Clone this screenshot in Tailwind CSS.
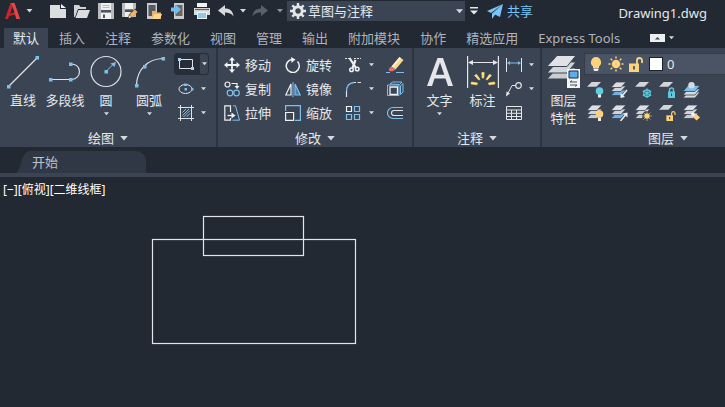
<!DOCTYPE html>
<html lang="zh-CN">
<head>
    <meta charset="UTF-8">
    <meta name="viewport" content="width=device-width, initial-scale=1.0">
    <title>Drawing1.dwg</title>
    <script src="https://cdn.jsdelivr.net/npm/@tailwindcss/browser@4"></script>
</head>
<body class="min-h-screen flex flex-col bg-[#222933] text-[13px] leading-4 text-[#e4e8ed] font-['Noto_Sans','Noto_Sans_CJK_SC',sans-serif]">

    <!-- Shared shapes -->
    <svg class="hidden">
        <symbol id="caret" viewBox="0 0 6 4"><path d="M0 0h6L3 3.6z" fill="#d5d9df"/></symbol>
        <symbol id="sheet" viewBox="0 0 16 16"><path d="M5 0h10l-5 5H0z" fill="#d3d5d8"/></symbol>
        <symbol id="stack" viewBox="0 0 16 16">
            <g stroke="#3b4453" stroke-width=".8">
                <path d="M5 8h10l-5 5.500H0z" fill="#c9ccd1"/>
                <path d="M5 4h10l-5 5.500H0z" fill="#d0d3d7"/>
                <path d="M5 0h10l-5 5.500H0z" fill="#dcdee1"/>
            </g>
        </symbol>
        <symbol id="stack-blue" viewBox="0 0 16 16">
            <g stroke="#3b4453" stroke-width=".8">
                <path d="M5 8h10l-5 5.500H0z" fill="#6fb0e6"/>
                <path d="M5 4h10l-5 5.500H0z" fill="#d0d3d7"/>
                <path d="M5 0h10l-5 5.500H0z" fill="#dcdee1"/>
            </g>
        </symbol>
        <symbol id="bulb" viewBox="0 0 12 14">
            <path d="M6 0a5.300 5.300 0 0 1 3 9.500V11H3V9.500A5.300 5.300 0 0 1 6 0z" fill="#fdd27c"/>
            <path d="M3.500 11.500h5V13l-1 1h-3l-1-1z" fill="#f1f1f1"/>
        </symbol>
        <symbol id="sun" viewBox="0 0 16 16">
            <circle cx="8" cy="8" r="4.300" fill="#fdd27c"/>
            <path d="M8 .5v2M8 13.500v2M.5 8h2M13.500 8h2M2.700 2.700l1.500 1.500M11.800 11.800l1.500 1.500M13.300 2.700l-1.500 1.500M4.200 11.800l-1.500 1.500" stroke="#fdd27c" stroke-width="1.500"/>
        </symbol>
        <symbol id="unlock" viewBox="0 0 14 15">
            <path d="M8 7V3.500a2.500 2.500 0 0 1 5 0V6" fill="none" stroke="#fdd27c" stroke-width="1.800"/>
            <path d="M0 6.500h10V15H0z" fill="#fdd27c"/>
            <path d="M4.200 9h1.600v3.500H4.200z" fill="#3b4453"/>
        </symbol>
    </svg>

    <!-- Title bar -->
    <header class="flex h-7 items-center pb-1.5 shrink-0">
        <button type="button" aria-label="应用程序菜单" class="flex w-[46px] items-center gap-1.5 pl-[5px]">
            <svg class="w-[15px] h-4" viewBox="0 0 15 16">
                <path d="M0 16 5.500 0h4L15 16h-3.500L10 11.500 4 13l-1 3z" fill="#c8252c"/>
                <path d="M5.500 0h4L15 16h-3.500L7.500 3z" fill="#e2474c"/>
                <path d="m7.400 4 2 5.500-4.200 1.200z" fill="#222933"/>
            </svg>
            <svg class="w-[7px] h-1"><use href="#caret"/></svg>
        </button>
        <button type="button" aria-label="新建" class="w-6 flex justify-center">
            <svg class="w-4 h-4" viewBox="0 0 16 16"><path d="M0 2h10v4h6v9H0z" fill="#dcdddf"/><path d="m11 1 5 4h-5z" fill="#f4f4f4"/></svg>
        </button>
        <button type="button" aria-label="打开" class="w-6 flex justify-center">
            <svg class="w-4 h-4" viewBox="0 0 16 16"><path d="M0 2h5l1.500 2H12v2H4L1 14H0z" fill="#cfd1d4"/><path d="M4.500 7H16l-3 8H1.500z" fill="#dcdddf"/></svg>
        </button>
        <button type="button" aria-label="保存" class="w-6 flex justify-center">
            <svg class="w-4 h-4" viewBox="0 0 16 16"><path d="M0 0h16v16H0z" fill="#b9bbbe"/><path d="M3 0h10v7H3zM3 9.500h10V16H3z" fill="#f0f0f0"/><path d="M3 7h10v2.500H3zM5 11.500h2V15H5z" fill="#4c525c"/><path d="M4.500 2.500h7M4.500 4.500h7" stroke="#b9bbbe"/></svg>
        </button>
        <button type="button" aria-label="另存为" class="w-6 flex justify-center">
            <svg class="w-4 h-4" viewBox="0 0 16 16"><path d="M0 0h14v14H0z" fill="#b9bbbe"/><path d="M3 0h8v6H3zM3 9h5v5H3z" fill="#f0f0f0"/><path d="M3 6.500h8V9H3z" fill="#4c525c"/><path d="m6 15.500 1-4 6.500-6 2.500 3-6.500 6z" fill="#222933"/><path d="m7.500 11.500 5.500-5 2.500 2.500-5.500 5.500z" fill="#f2b66b"/><path d="m7.500 12 2 2-3 1.500z" fill="#f2e3cc"/></svg>
        </button>
        <button type="button" aria-label="从移动设备打开" class="w-6 flex justify-center">
            <svg class="w-4 h-4" viewBox="0 0 16 16"><path d="M1 0h10v16H1z" fill="#c9cbce"/><path d="M2.500 2h7v11h-7z" fill="#555b64"/><path d="M6 8h4l1 1.500h4V16H6z" fill="#e8b264"/><path d="M8 11h8l-2 5H6z" fill="#fdd58f"/></svg>
        </button>
        <button type="button" aria-label="保存到移动设备" class="w-6 flex justify-center">
            <svg class="w-4 h-4" viewBox="0 0 16 16"><path d="M4 0h10v16H4z" fill="#c9cbce"/><path d="M5.500 2h7v11h-7z" fill="#6c6560"/><path d="M1 4.500h5V2l5 4.500L6 11V8.500H1z" fill="#6cc0f5"/></svg>
        </button>
        <button type="button" aria-label="打印" class="w-6 flex justify-center">
            <svg class="w-4 h-4" viewBox="0 0 16 16"><path d="M3 0h10v4H3z" fill="#f2f2f2"/><path d="M0 5h16v7H0z" fill="#dcdddf"/><path d="M1 6.500h14" stroke="#59606b" stroke-width="1.200"/><path d="M3 9h10v7H3z" fill="#f2f2f2"/><path d="M4 10h8v5H4z" fill="#8cc9ee"/></svg>
        </button>
        <button type="button" aria-label="放弃" class="w-6 flex justify-center">
            <svg class="w-4 h-4" viewBox="0 0 16 16"><path d="M0 7.500 7 2v3.500c5 0 8 2.500 8.500 8C13.500 10.500 11 9.500 7 9.500V13z" fill="#d7d9dc"/></svg>
        </button>
        <button type="button" aria-label="放弃列表" class="w-2.5 flex justify-center"><svg class="w-1.5 h-1"><use href="#caret"/></svg></button>
        <button type="button" aria-label="重做" class="w-6 flex justify-center">
            <svg class="w-4 h-4" viewBox="0 0 16 16"><path d="M16 7.500 9 2v3.500c-5 0-8 2.500-8.500 8C2.500 10.500 5 9.500 9 9.500V13z" fill="#5a6069"/></svg>
        </button>
        <button type="button" aria-label="重做列表" class="w-[15px] flex justify-center opacity-60"><svg class="w-1.5 h-1"><use href="#caret"/></svg></button>
        <div class="relative flex h-5 w-[178px] items-center bg-[#3b4453] pl-[3px]">
            <svg class="w-4 h-4 shrink-0" viewBox="0 0 16 16">
                <circle cx="8" cy="8" r="4.200" fill="none" stroke="#e6e6e6" stroke-width="3"/>
                <path d="M8 0v3M8 13v3M0 8h3M13 8h3M2.300 2.300l2.200 2.200M11.500 11.500l2.200 2.200M13.700 2.300l-2.200 2.200M4.500 11.500l-2.200 2.200" stroke="#e6e6e6" stroke-width="2.400"/>
            </svg>
            <select aria-label="工作空间" class="h-5 w-full appearance-none bg-transparent pl-0.5 leading-5 outline-none">
                <option>草图与注释</option>
                <option>三维基础</option>
                <option>三维建模</option>
            </select>
            <svg class="pointer-events-none absolute right-0.5 top-2 w-[7px] h-[5px]"><use href="#caret"/></svg>
        </div>
        <button type="button" aria-label="自定义快速访问工具栏" class="w-[18px] flex justify-center">
            <svg class="w-2 h-2" viewBox="0 0 8 8"><path d="M0 0h8v1.500H0zM0 3.500h8L4 7.500z" fill="#e6e8eb"/></svg>
        </button>
        <a href="#" class="ml-1 flex items-center gap-1 text-[#7cc4f5]">
            <svg class="w-4 h-[15px]" viewBox="0 0 16 15"><path d="M16 0 0 7l4 2zM16 0 5 9.500V15l2.500-3.500zM16 0 8 10.500l5 2.500z" fill="#7cc4f5"/></svg>
            共享
        </a>
        <h1 class="ml-auto pr-[18px] pt-1 whitespace-nowrap">Drawing1.dwg</h1>
    </header>

    <!-- Ribbon tabs -->
    <nav class="flex h-5 shrink-0 items-stretch pl-[3px] leading-5 text-[#aeb4bd] whitespace-nowrap">
        <a href="#" class="mx-px px-[9px] bg-[#3b4453] text-[#e4e8ed]">默认</a>
        <a href="#" class="px-2.5">插入</a>
        <a href="#" class="px-2.5">注释</a>
        <a href="#" class="px-2.5">参数化</a>
        <a href="#" class="px-2.5">视图</a>
        <a href="#" class="px-2.5">管理</a>
        <a href="#" class="px-2.5">输出</a>
        <a href="#" class="px-2.5">附加模块</a>
        <a href="#" class="px-2.5">协作</a>
        <a href="#" class="px-2.5">精选应用</a>
        <a href="#" class="px-2.5">Express Tools</a>
        <button type="button" aria-label="最小化功能区" class="ml-5 flex items-center gap-1">
            <svg class="w-[15px] h-2" viewBox="0 0 15 8"><path d="M0 0h15v8H0z" fill="#eceef0"/><path d="M5 5.500h5L7.500 3z" fill="#3b4453"/></svg>
            <svg class="w-[5px] h-1"><use href="#caret"/></svg>
        </button>
    </nav>

    <!-- Ribbon -->
    <main class="flex grow flex-col">
        <div class="flex h-[99px] shrink-0 divide-x-2 divide-[#2c3440] bg-[#3b4453]">

            <!-- Draw -->
            <section class="flex w-[218px] shrink-0 flex-col pt-[5px]">
                <div class="flex h-[72px] pl-0.5">
                    <button type="button" class="flex w-[42px] flex-col items-center">
                        <svg class="w-8 h-[39px] shrink-0" viewBox="0 0 32 39"><path d="M2 33 30 5" stroke="#dfe2e6" stroke-width="1.200"/><path d="M0 32h3.500v3.500H0zM28.500 3H32v3.500h-3.500z" fill="#7cc0ee"/></svg>
                        直线
                    </button>
                    <button type="button" class="flex w-[42px] flex-col items-center">
                        <svg class="w-8 h-[39px] shrink-0" viewBox="0 0 32 39"><path d="M2 26.500h20c4.500 0 8.500-3 8.500-8s-4-7.500-8.500-7.500" fill="none" stroke="#dfe2e6" stroke-width="1.200"/><path d="M0 25h3.500v3.500H0zM20 25h3.500v3.500H20zM20 9.500h3.500V13H20z" fill="#7cc0ee"/></svg>
                        多段线
                    </button>
                    <button type="button" class="flex w-[40px] flex-col items-center">
                        <svg class="w-8 h-[39px] shrink-0" viewBox="0 0 32 39"><circle cx="16" cy="18.500" r="15" fill="none" stroke="#dfe2e6" stroke-width="1.200"/><path d="m16 18.500 7-7" stroke="#7cc0ee"/><path d="M14.500 17H18v3.500h-3.500zM26 9l-1.500 5-4-3.500z" fill="#7cc0ee"/></svg>
                        圆
                        <svg class="mt-1 w-[5px] h-1"><use href="#caret"/></svg>
                    </button>
                    <button type="button" class="flex w-[46px] flex-col items-center">
                        <svg class="w-8 h-[39px] shrink-0" viewBox="0 0 32 39"><path d="M3.500 32C4 17 14 6 30 5.500" fill="none" stroke="#dfe2e6" stroke-width="1.200"/><path d="M2 31h3.500v3.500H2zM10 12h3.500v3.500H10zM28.500 4H32v3.500h-3.500z" fill="#7cc0ee"/></svg>
                        圆弧
                        <svg class="mt-1 w-[5px] h-1"><use href="#caret"/></svg>
                    </button>
                    <div class="ml-0.5 grid w-[35px] grid-rows-3">
                        <button type="button" aria-label="矩形" class="flex h-[22px] items-center gap-[5px] rounded-sm bg-[#272e39] pl-1">
                            <svg class="w-4 h-4" viewBox="0 0 16 16"><path d="M1.500 3.500h13v9h-13z" fill="none" stroke="#dfe2e6"/><path d="M0 2h3v3H0zM13 11h3v3h-3z" fill="#a9d4f2"/></svg>
                            <span class="flex h-full flex-1 items-center justify-center rounded-r-sm bg-[#3b4453] border border-[#272e39]"><svg class="w-[5px] h-1"><use href="#caret"/></svg></span>
                        </button>
                        <button type="button" aria-label="椭圆" class="flex items-center gap-[7px] pl-1">
                            <svg class="w-4 h-4" viewBox="0 0 16 16"><ellipse cx="7.500" cy="8" rx="6.500" ry="4.500" fill="none" stroke="#dfe2e6"/><path d="M6 2.500h3v2.500H6zM6.500 7H9v2.500H6.500zM13 7h2.500v2.500H13z" fill="#7cc0ee"/></svg>
                            <svg class="w-[5px] h-1"><use href="#caret"/></svg>
                        </button>
                        <button type="button" aria-label="图案填充" class="flex items-center gap-[7px] pl-1">
                            <svg class="w-4 h-4" viewBox="0 0 16 16"><path d="m4.500 7.500 3.500-3.500M4.500 10.500 11 4M5.500 12 12 5.500M8.500 12 12 8.500" stroke="#7cc0ee"/><path d="M0 2.500h16M0 13.500h16M2.500 0v16M13.500 0v16" stroke="#dfe2e6"/></svg>
                            <svg class="w-[5px] h-1"><use href="#caret"/></svg>
                        </button>
                    </div>
                </div>
                <button type="button" class="flex h-[22px] items-center justify-center gap-1.5 pt-1">绘图 <svg class="w-2 h-[5px]"><use href="#caret"/></svg></button>
            </section>

            <!-- Modify -->
            <section class="flex w-[196px] shrink-0 flex-col pt-[5px]">
                <div class="grid h-[72px] grid-cols-[61px_60px_41px_20px] grid-rows-3 pl-1.5">
                    <button type="button" class="flex items-center gap-[5px]">
                        <svg class="w-4 h-4" viewBox="0 0 16 16"><path d="M8 2v12M2 8h12" stroke="#f0f1f3" stroke-width="1.800"/><path d="m8 0 3 3.500H5zM8 16l3-3.500H5zM0 8l3.500-3v6zM16 8l-3.500-3v6z" fill="#f0f1f3"/></svg>
                        移动
                    </button>
                    <button type="button" class="flex items-center gap-[5px]">
                        <svg class="w-4 h-4" viewBox="0 0 16 16"><path d="M12.500 4.500A6.500 6.500 0 1 1 7 2.500" fill="none" stroke="#f0f1f3" stroke-width="1.500"/><path d="m6 0 4.500 2.500L6.500 6z" fill="#f0f1f3"/></svg>
                        旋转
                    </button>
                    <button type="button" aria-label="修剪" class="flex items-center gap-2">
                        <svg class="w-4 h-4" viewBox="0 0 16 16"><path d="M0 1.500h4M9 1.500h7" stroke="#dfe2e6" stroke-dasharray="2 1"/><path d="m4.500 1 6.500 10M10.500 3 7.500 11" stroke="#f0f1f3" stroke-width="2.200"/><circle cx="6.500" cy="12.800" r="1.800" fill="none" stroke="#f0f1f3" stroke-width="1.500"/><circle cx="12.200" cy="12" r="1.800" fill="none" stroke="#f0f1f3" stroke-width="1.500"/></svg>
                        <svg class="w-[5px] h-1"><use href="#caret"/></svg>
                    </button>
                    <button type="button" aria-label="删除" class="flex items-center">
                        <svg class="w-[18px] h-4" viewBox="0 0 18 16"><path d="M0 15.500h4M10 15.500h8" stroke="#7cc0ee"/><path d="M13.500 0 17.500 3l-8 9.500-4-3z" fill="#fcd988"/><path d="m13.500 0 1.500 1.200-8 9.300-1.500-1z" fill="#f4efdf"/><path d="m5.500 9.500 4 3C7 15 3.500 14.500 3 13.500s0-2.500 2.500-4z" fill="#ee6b6b"/></svg>
                    </button>

                    <button type="button" class="flex items-center gap-[5px]">
                        <svg class="w-4 h-4" viewBox="0 0 16 16"><g fill="none"><circle cx="3.500" cy="3.500" r="2.500" stroke="#f0f1f3" stroke-width="1.200"/><path d="M7.500 2.500H13V6" stroke="#f0f1f3" stroke-width="1.200"/><g stroke="#7cc0ee" stroke-width="1.200"><circle cx="6" cy="12" r="2.800"/><circle cx="12.500" cy="12" r="2.800"/></g></g><path d="M10.500 5h5L13 8z" fill="#f0f1f3"/></svg>
                        复制
                    </button>
                    <button type="button" class="flex items-center gap-[5px]">
                        <svg class="w-4 h-4" viewBox="0 0 16 16"><path d="M6 3v11H.8z" fill="none" stroke="#f0f1f3" stroke-width="1.200"/><path d="M10 3v11h5.200z" fill="#4f7fa8" stroke="#7cc0ee" stroke-width="1.200"/><path d="M8 1v15" stroke="#7cc0ee"/></svg>
                        镜像
                    </button>
                    <button type="button" aria-label="圆角" class="flex items-center gap-2">
                        <svg class="w-4 h-4" viewBox="0 0 16 16"><path d="M1.500 10C1.500 5 4.500 2 9 1.500" fill="none" stroke="#7cc0ee" stroke-width="1.300"/><path d="M1.500 16v-6M9 1.500h2M12.500 1.500H16" stroke="#dfe2e6" stroke-width="1.200"/></svg>
                        <svg class="w-[5px] h-1"><use href="#caret"/></svg>
                    </button>
                    <button type="button" aria-label="分解" class="flex items-center">
                        <svg class="w-[18px] h-4" viewBox="0 0 18 16"><path d="M4 6h7.500v7.500H4z" fill="none" stroke="#f0f1f3" stroke-width="1.300"/><path d="M1.500 14.500V4H13v10.500zM4 3 6.500 1H16l-2.500 2.500zM14.500 5 17 2.500V11l-2.500 2.500z" fill="none" stroke="#7cc0ee"/></svg>
                    </button>

                    <button type="button" class="flex items-center gap-[5px]">
                        <svg class="w-4 h-4" viewBox="0 0 16 16"><path d="M6.500 7V.8H.8v14.400h5.700V13" fill="none" stroke="#f0f1f3" stroke-width="1.200"/><path d="M9 .8h2.500l4 14.400H8.500" fill="none" stroke="#7cc0ee"/><path d="M3.500 10.500H8" stroke="#f0f1f3" stroke-width="1.300"/><path d="m7.500 7.500 4 3-4 3z" fill="#f0f1f3"/></svg>
                        拉伸
                    </button>
                    <button type="button" class="flex items-center gap-[5px]">
                        <svg class="w-4 h-4" viewBox="0 0 16 16"><path d="M.6 6V.6h14.800v14.800H10" fill="none" stroke="#7cc0ee" stroke-width="1.200"/><path d="M.6 7.500h8v7.900h-8z" fill="none" stroke="#f0f1f3" stroke-width="1.200"/></svg>
                        缩放
                    </button>
                    <button type="button" aria-label="阵列" class="flex items-center gap-2">
                        <svg class="w-4 h-4" viewBox="0 0 16 16"><g fill="none" stroke="#7cc0ee" stroke-width="1.200"><path d="M9.500 1.500h5v5h-5zM9.500 9.500h5v5h-5zM1.500 9.500h5v5h-5z"/><path d="M1.500 1.500h5v5h-5z" stroke="#f0f1f3"/></g></svg>
                        <svg class="w-[5px] h-1"><use href="#caret"/></svg>
                    </button>
                    <button type="button" aria-label="偏移" class="flex items-center">
                        <svg class="w-[18px] h-4" viewBox="0 0 18 16"><path d="M17 2.500H7a5.500 5.500 0 0 0 0 11h10" fill="none" stroke="#7cc0ee" stroke-width="1.200"/><path d="M17 5.500H8a2.500 2.500 0 0 0 0 5h9" fill="none" stroke="#dfe2e6" stroke-width="1.200"/></svg>
                    </button>
                </div>
                <button type="button" class="flex h-[22px] items-center justify-center gap-1.5 pt-1">修改 <svg class="w-2 h-[5px]"><use href="#caret"/></svg></button>
            </section>

            <!-- Annotation -->
            <section class="flex w-32 shrink-0 flex-col pt-[5px]">
                <div class="flex h-[72px] pl-1">
                    <button type="button" class="flex w-[43px] flex-col items-center">
                        <svg class="w-7 h-[39px] shrink-0" viewBox="0 0 28 39"><path d="M11.500 5h5.500L27 33h-5l-2.500-7.500H8.500L6 33H1zM14 9.500l-4.200 12.300h8.500z" fill="#e4e6e9" fill-rule="evenodd"/></svg>
                        文字
                        <svg class="mt-1 w-[5px] h-1"><use href="#caret"/></svg>
                    </button>
                    <button type="button" class="flex w-[43px] flex-col items-center">
                        <svg class="w-8 h-[39px] shrink-0" viewBox="0 0 32 39"><path d="M.6 3v32M31.400 3v32M2 9.500h28" stroke="#e4e6e9" stroke-width="1.200"/><path d="m1 9.500 5-2.500v5zM31 9.500 26 7v5z" fill="#e4e6e9"/><path d="M14.800 19.500h2.400L16.800 25h-1.600zM7.500 22.500l2-1.200 3.500 5-1.200.8zM24.500 22.500l-2-1.200-3.500 5 1.200.8zM4.500 29l6 1-.5 1.800-6-.8zM27.500 29l-6 1 .5 1.800 6-.8z" fill="#ffe27a" stroke="#ffe27a" stroke-width=".6"/></svg>
                        标注
                    </button>
                    <div class="ml-0.5 grid w-8 grid-rows-3">
                        <button type="button" aria-label="线性" class="flex items-center gap-[7px]">
                            <svg class="w-4 h-4" viewBox="0 0 16 16"><path d="M.5 1v14M15.500 1v14" stroke="#e4e6e9"/><path d="M3 6h10" stroke="#7cc0ee"/><path d="m1 6 3-2v4zM15 6l-3-2v4z" fill="#7cc0ee"/></svg>
                            <svg class="w-[5px] h-1"><use href="#caret"/></svg>
                        </button>
                        <button type="button" aria-label="引线" class="flex items-center gap-[7px]">
                            <svg class="w-4 h-4" viewBox="0 0 16 16"><circle cx="12.500" cy="4.500" r="2.800" fill="none" stroke="#e4e6e9" stroke-width="1.200"/><path d="M9.500 4.500H6L1.500 13" fill="none" stroke="#e4e6e9"/><path d="m0 15.500.5-5 3.500 2z" fill="#e4e6e9"/></svg>
                            <svg class="w-[5px] h-1"><use href="#caret"/></svg>
                        </button>
                        <button type="button" aria-label="表格" class="flex items-center">
                            <svg class="w-4 h-4" viewBox="0 0 16 16"><path d="M.5 1.500h15v13H.5zM.5 5h15M.5 8.300h15M.5 11.500h15M5.500 5v9.500M10.500 5v9.500" fill="none" stroke="#e4e6e9"/></svg>
                        </button>
                    </div>
                </div>
                <button type="button" class="flex h-[22px] items-center justify-center gap-1.5 pt-1">注释 <svg class="w-2 h-[5px]"><use href="#caret"/></svg></button>
            </section>

            <!-- Layers -->
            <section class="flex min-w-0 flex-1 flex-col pt-[5px]">
                <div class="flex h-[72px] pl-px">
                    <button type="button" class="flex w-[41px] shrink-0 flex-col items-center leading-[18px]">
                        <svg class="w-[33px] h-[38px] shrink-0" viewBox="0 0 33 38">
                            <g stroke="#3b4453">
                                <path d="M10 15h19l-9 11H0z" fill="#c9ccd1"/>
                                <path d="M10 9h19l-9 11H0z" fill="#d2d5d9"/>
                                <path d="M10 2.500h19l-9 11H0z" fill="#e0e2e5"/>
                            </g>
                            <path d="M20 16h13v19H20z" fill="#f2f3f5"/>
                            <path d="M22 18h9v7h-9z" fill="#58aef0" stroke="#222933"/>
                            <path d="M23 29h7M23 32h7M25 27.500 23 29M28 33.500l2-1.500" stroke="#444c59"/>
                        </svg>
                        图层
                        <span>特性</span>
                    </button>
                    <div class="flex min-w-0 flex-1 flex-col">
                        <div class="flex h-[22px] items-center gap-1 bg-[#4a5465] border border-r-0 border-[#333b48] pl-[3px]">
                            <svg class="w-4 h-[14px] shrink-0"><use href="#bulb"/></svg>
                            <svg class="w-4 h-4 shrink-0"><use href="#sun"/></svg>
                            <svg class="w-4 h-[15px] shrink-0"><use href="#unlock"/></svg>
                            <span class="ml-px w-[14px] h-[14px] shrink-0 border border-[#1c222b] bg-white"></span>
                            <select aria-label="图层" class="h-5 min-w-0 flex-1 appearance-none bg-transparent leading-5 outline-none">
                                <option>0</option>
                            </select>
                        </div>
                        <div class="grid flex-1 grid-cols-[repeat(5,24px)] grid-rows-2 pl-[3px] pt-[3px]">
                            <button type="button" aria-label="关" class="flex items-center">
                                <svg class="w-[17px] h-4" viewBox="0 0 17 16"><use href="#sheet" width="15" height="15"/><circle cx="12.500" cy="9" r="3.800" fill="#5cd0e0"/><path d="M11 12.500h3V15.500h-3z" fill="#f1f1f1"/></svg>
                            </button>
                            <button type="button" aria-label="隔离" class="flex items-center">
                                <svg class="w-[17px] h-4" viewBox="0 0 17 16"><use href="#stack-blue" width="16" height="16"/><path d="m16 8-5 6" stroke="#f0f1f3" stroke-width="1.500"/><path d="M9.500 16v-5l4.500 4z" fill="#f0f1f3"/></svg>
                            </button>
                            <button type="button" aria-label="冻结" class="flex items-center">
                                <svg class="w-[17px] h-4" viewBox="0 0 17 16"><use href="#sheet" width="15" height="15"/><path d="M12 6.500v9.500M7.800 8.800l8.400 4.900M16.200 8.800l-8.400 4.900" stroke="#5cc9dd" stroke-width="1.300"/><circle cx="12" cy="11.200" r="3.300" fill="none" stroke="#5cc9dd" stroke-width="1.200"/></svg>
                            </button>
                            <button type="button" aria-label="锁定" class="flex items-center">
                                <svg class="w-[17px] h-4" viewBox="0 0 17 16"><use href="#sheet" width="15" height="15"/><path d="M10.500 10V8a2 2 0 0 1 4 0v2" fill="none" stroke="#5cc9dd" stroke-width="1.400"/><path d="M9 9.500h7V16H9z" fill="#5cc9dd"/><path d="M12 11.500h1v2.500h-1z" fill="#2c4a5a"/></svg>
                            </button>
                            <button type="button" aria-label="置为当前" class="flex items-center">
                                <svg class="w-[17px] h-4" viewBox="0 0 17 16"><g stroke="#3b4453" stroke-width=".8"><path d="M5 10h12l-5 6H0z" fill="#d9dbde"/><path d="M5 7h12l-5 6H0z" fill="#d9dbde"/><path d="M5 3.500h12L12 9.500H0z" fill="#7cc0ee"/></g><circle cx="8.500" cy="3.200" r="3.200" fill="#d9dbde"/></svg>
                            </button>
                            <button type="button" aria-label="打开所有图层" class="flex items-center">
                                <svg class="w-[17px] h-4" viewBox="0 0 17 16"><use href="#stack" width="16" height="16"/><circle cx="12.500" cy="9" r="3.800" fill="#fdd27c"/><path d="M11 12.500h3V16h-3z" fill="#f1f1f1"/></svg>
                            </button>
                            <button type="button" aria-label="取消隔离" class="flex items-center">
                                <svg class="w-[17px] h-4" viewBox="0 0 17 16"><use href="#stack-blue" width="16" height="16"/><path d="m9.500 16 5-6" stroke="#f0f1f3" stroke-width="1.500"/><path d="M16.500 7.500v5l-4.500-4z" fill="#f0f1f3"/></svg>
                            </button>
                            <button type="button" aria-label="解冻所有图层" class="flex items-center">
                                <svg class="w-[17px] h-4" viewBox="0 0 17 16"><use href="#stack" width="16" height="16"/><circle cx="12" cy="11" r="5" fill="#3b4453"/><use href="#sun" x="7" y="6" width="10" height="10"/></svg>
                            </button>
                            <button type="button" aria-label="解锁" class="flex items-center">
                                <svg class="w-[17px] h-4" viewBox="0 0 17 16"><use href="#sheet" width="15" height="15"/><use href="#unlock" x="7" y="6" width="10" height="10"/></svg>
                            </button>
                            <button type="button" aria-label="匹配图层" class="flex items-center">
                                <svg class="w-[17px] h-4" viewBox="0 0 17 16"><use href="#stack" width="16" height="16"/><path d="m7.500 9 2.500-2 3 3-2.500 2z" fill="#f0f1f3"/><path d="m10 12 3.500-3 3.500 3.500-3.500 3z" fill="#fdd27c"/></svg>
                            </button>
                        </div>
                    </div>
                </div>
                <button type="button" class="flex h-[22px] items-center gap-1.5 pl-[106px] pt-1">图层 <svg class="w-2 h-[5px]"><use href="#caret"/></svg></button>
            </section>
        </div>

        <!-- Drawing file tabs -->
        <div class="flex h-[30px] shrink-0 items-end border-b-4 border-[#3b4453] pl-4">
            <a href="#" class="relative flex h-[22px] w-[130px] items-center pl-4 text-[#bcc2ca]">
                <svg class="absolute inset-0 h-full w-full" viewBox="0 0 130 22" preserveAspectRatio="none"><path d="M0 22c6-4 5-22 14-22h104c8 0 12 4 12 11v11z" fill="#303846"/></svg>
                <span class="relative">开始</span>
            </a>
        </div>

        <!-- Model space -->
        <div class="relative grow overflow-hidden">
            <p class="relative pl-[3px] pt-[5px] text-[12px] text-white">[−][俯视][二维线框]</p>
            <svg class="absolute inset-0 h-full w-full" fill="none" stroke="#e3e6ea" stroke-width="1.200">
                <rect x="152.500" y="62.500" width="203" height="104"/>
                <rect x="203.500" y="39.500" width="100" height="39"/>
            </svg>
        </div>
    </main>
</body>
</html>
